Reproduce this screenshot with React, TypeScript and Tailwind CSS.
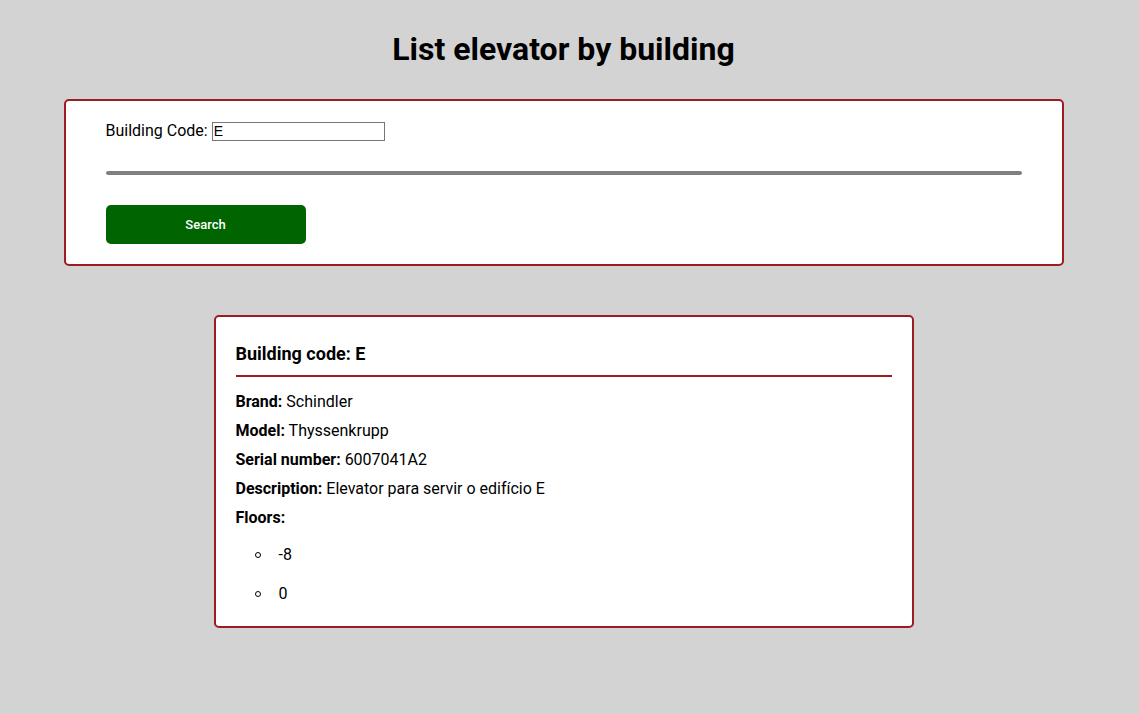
import React from "react";

export default function App() {
  return (
    <div className="min-h-screen bg-[#d3d3d3] font-['Roboto',sans-serif] text-black">
      <div className="w-[1127px] pt-[30px] pb-[80px] flex flex-col items-center">
        <h1 className="text-[32px] leading-[38px] font-bold">List elevator by building</h1>
        <div className="mt-[31px] w-[1000px] bg-white border-2 border-[#9e1b23] rounded-[5px] pt-[20px] pb-[20px] pl-[40px] pr-[40px]">
          <div className="flex items-center h-[20px] text-[16px]">
            <span>Building Code:&nbsp;</span>
            <input
              defaultValue="E"
              className="w-[173px] h-[19px] border border-[#767676] px-[1px] text-[14px] font-['Liberation_Sans',sans-serif] outline-none"
            />
          </div>
          <div className="mt-[30px] h-[4px] rounded-full bg-[#808080]" />
          <button className="mt-[30px] w-[200px] h-[39px] rounded-[5px] bg-[#006400] text-white text-[13px] font-medium">
            Search
          </button>
        </div>
        <div className="mt-[49px] w-[700px] bg-white border-2 border-[#9e1b23] rounded-[5px] pt-[26px] pb-[23px] px-[20px]">
          <h3 className="text-[18px] leading-[21px] font-bold pb-[11px] border-b-2 border-[#9e1b23]">
            Building code: E
          </h3>
          <div className="mt-[15px] flex flex-col gap-[10px] text-[16px] leading-[19px]">
            <p><b>Brand:</b> Schindler</p>
            <p><b>Model:</b> Thyssenkrupp</p>
            <p><b>Serial number:</b> 6007041A2</p>
            <p><b>Description:</b> Elevator para servir o edifício E</p>
            <p><b>Floors:</b></p>
          </div>
          <ul className="mt-[18px] flex flex-col gap-[20px] text-[16px] leading-[19px]">
            {["-8", "0"].map((f) => (
              <li key={f} className="flex items-center">
                <span className="ml-[19px] w-[6px] h-[6px] rounded-full border border-black" />
                <span className="ml-[18px]">{f}</span>
              </li>
            ))}
          </ul>
        </div>
      </div>
    </div>
  );
}
